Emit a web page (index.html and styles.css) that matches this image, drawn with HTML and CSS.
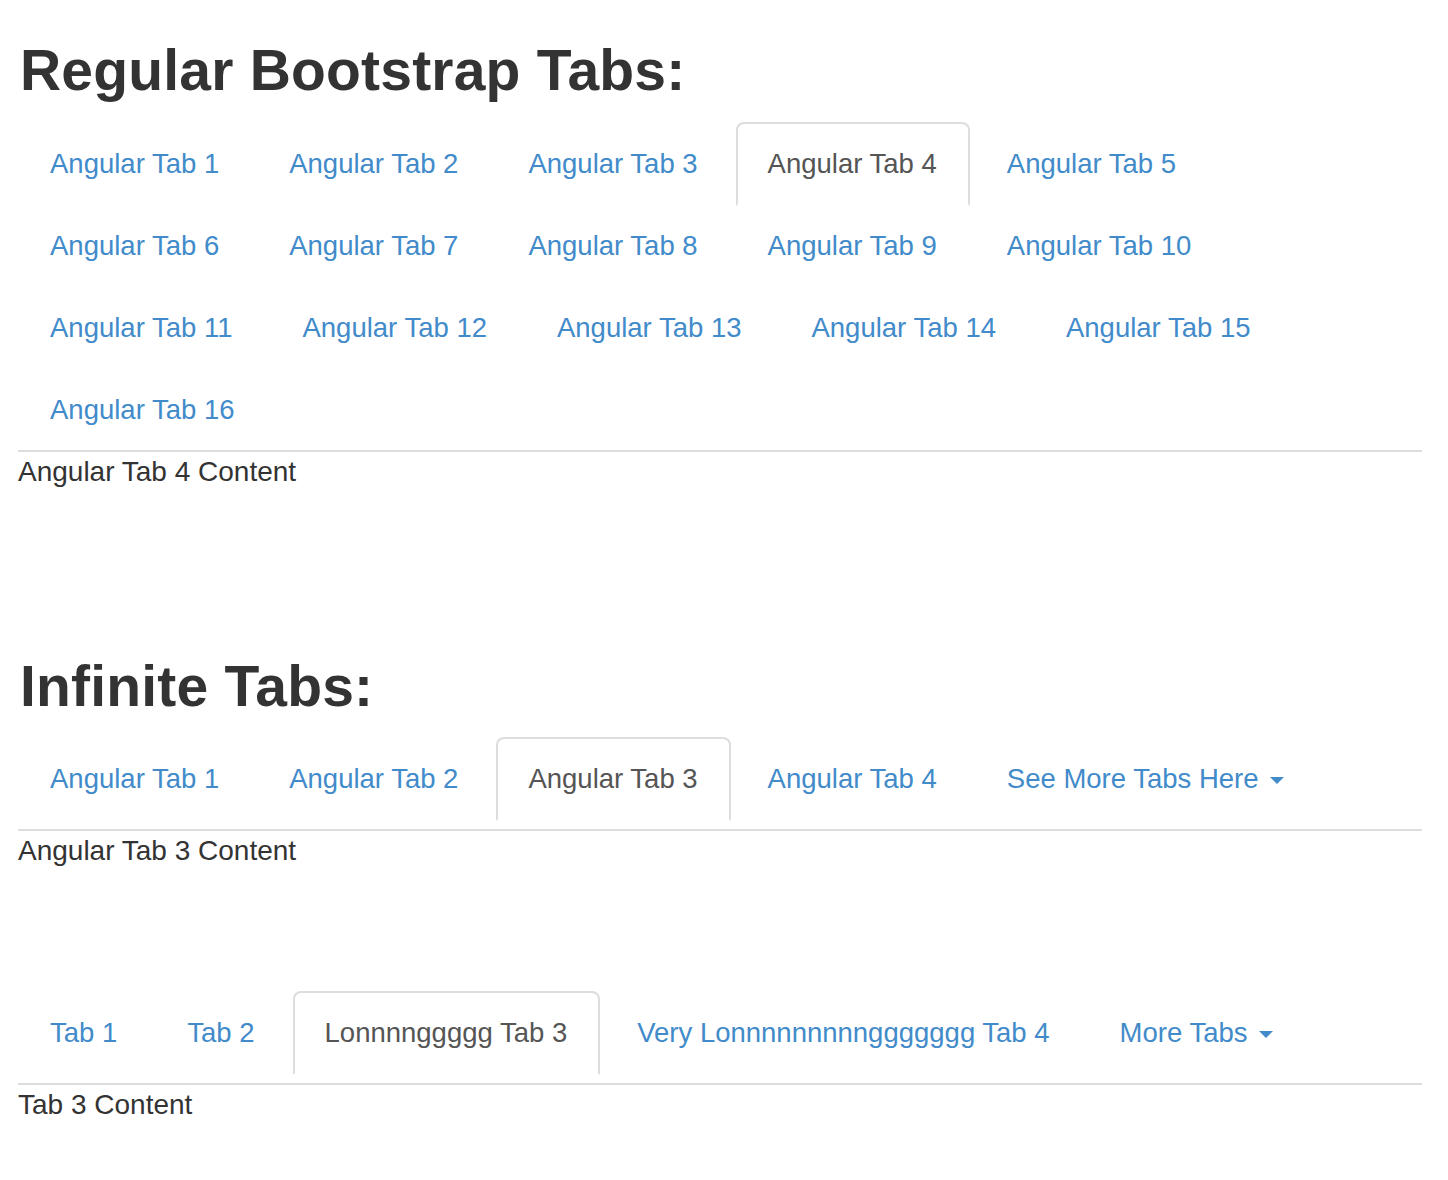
FILE: index.html
```html
<!DOCTYPE html>
<html lang="en">
<head>
<meta charset="utf-8">
<title>Tabs</title>
<link rel="stylesheet" href="styles.css">
</head>
<body>
<div class="page">
  <h1 class="title">Regular Bootstrap Tabs:</h1>
  <ul class="nav-tabs">
    <li><a href="#">Angular Tab 1</a></li>
    <li><a href="#">Angular Tab 2</a></li>
    <li><a href="#">Angular Tab 3</a></li>
    <li class="active"><a href="#">Angular Tab 4</a></li>
    <li><a href="#">Angular Tab 5</a></li>
    <li><a href="#">Angular Tab 6</a></li>
    <li><a href="#">Angular Tab 7</a></li>
    <li><a href="#">Angular Tab 8</a></li>
    <li><a href="#">Angular Tab 9</a></li>
    <li><a href="#">Angular Tab 10</a></li>
    <li><a href="#">Angular Tab 11</a></li>
    <li><a href="#">Angular Tab 12</a></li>
    <li><a href="#">Angular Tab 13</a></li>
    <li><a href="#">Angular Tab 14</a></li>
    <li><a href="#">Angular Tab 15</a></li>
    <li><a href="#">Angular Tab 16</a></li>
  </ul>
  <div class="tab-content gap-lg">Angular Tab 4 Content</div>

  <h1 class="title">Infinite Tabs:</h1>
  <ul class="nav-tabs infinite">
    <li><a href="#">Angular Tab 1</a></li>
    <li><a href="#">Angular Tab 2</a></li>
    <li class="active"><a href="#">Angular Tab 3</a></li>
    <li><a href="#">Angular Tab 4</a></li>
    <li><a href="#">See More Tabs Here <span class="caret"></span></a></li>
  </ul>
  <div class="tab-content gap-md">Angular Tab 3 Content</div>

  <ul class="nav-tabs infinite">
    <li><a href="#">Tab 1</a></li>
    <li><a href="#">Tab 2</a></li>
    <li class="active"><a href="#">Lonnnnggggg Tab 3</a></li>
    <li><a href="#">Very Lonnnnnnnnnggggggg Tab 4</a></li>
    <li><a href="#">More Tabs <span class="caret"></span></a></li>
  </ul>
  <div class="tab-content">Tab 3 Content</div>
</div>
</body>
</html>
```

FILE: styles.css
```css
html, body {
  margin: 0;
  padding: 0;
  background: #fff;
}

body {
  font-family: "Liberation Sans", Arial, Helvetica, sans-serif;
  font-size: 28px;
  line-height: 40px;
  color: #333;
}

.page {
  display: flex;
  flex-direction: column;
  margin: 0 26px 0 18px;
}

.title {
  margin: 40px 0 20px 2px;
  font-size: 57px;
  font-weight: bold;
  line-height: 61.6px;
  letter-spacing: 0.2px;
  color: #333;
}

.nav-tabs {
  display: flex;
  flex-wrap: wrap;
  list-style: none;
  margin: 0;
  padding: 0;
  border-bottom: 2px solid #ddd;
  font-size: 27.5px;
}

.nav-tabs.infinite {
  padding-bottom: 10px;
}

.nav-tabs li {
  margin-bottom: -2px;
}

.nav-tabs a {
  display: block;
  margin-right: 5px;
  padding: 20px 31px 20px 30px;
  border: 2px solid transparent;
  border-radius: 8px 8px 0 0;
  color: #428bca;
  text-decoration: none;
  white-space: nowrap;
}

.nav-tabs li.active a {
  color: #555;
  background: #fff;
  border-color: #ddd #ddd transparent;
}

.caret {
  display: inline-block;
  width: 0;
  height: 0;
  margin-left: 4px;
  vertical-align: middle;
  border-top: 7px solid #428bca;
  border-left: 7px solid transparent;
  border-right: 7px solid transparent;
}

.tab-content {
  color: #333;
}

.gap-lg {
  padding-bottom: 124px;
}

.gap-md {
  padding-bottom: 120px;
}
```
